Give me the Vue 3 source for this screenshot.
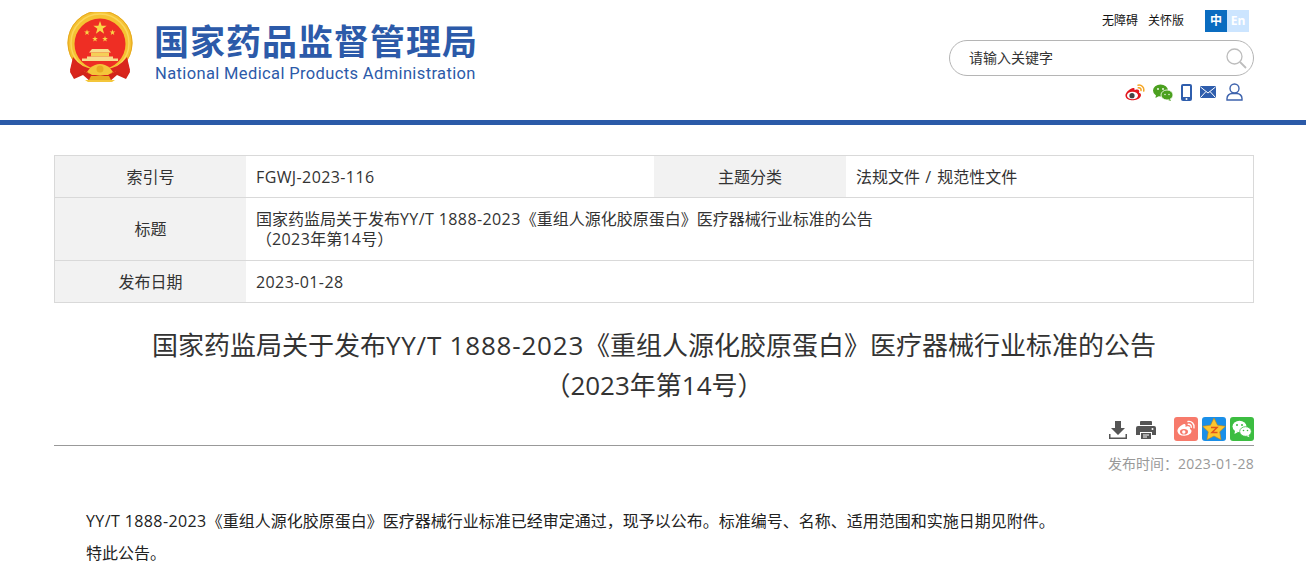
<script setup>
const star = (cx, cy, r, ratio = 0.4) => {
  const pts = []
  for (let i = 0; i < 10; i++) {
    const a = (Math.PI / 5) * i - Math.PI / 2
    const q = i % 2 ? r * ratio : r
    pts.push((cx + q * Math.cos(a)).toFixed(2) + ',' + (cy + q * Math.sin(a)).toFixed(2))
  }
  return pts.join(' ')
}
</script>

<template>
  <div class="page">
    <header class="head">
      <div class="head-in">
        <div class="brand">
          <svg class="emblem" viewBox="0 0 66 70" width="66" height="70">
            <path d="M7 44 L3 60 L7 67 L16 63 L24 70 L42 70 L50 63 L59 67 L63 60 L59 44 Z" fill="#d2231b" />
            <circle cx="33" cy="31" r="32.500" fill="#f5c232" />
            <circle cx="33" cy="31" r="32" fill="none" stroke="#e6a820" stroke-width="1" />
            <circle cx="33" cy="31" r="29" fill="none" stroke="#fbd65a" stroke-width="1.500" />
            <circle cx="33" cy="32" r="25.500" fill="#ee2e24" />
            <polygon :points="star(33, 16, 7)" fill="#f9d648" />
            <polygon :points="star(20, 20.500, 3)" fill="#f9d648" />
            <polygon :points="star(45.500, 20.500, 3)" fill="#f9d648" />
            <polygon :points="star(28, 27, 3)" fill="#f9d648" />
            <polygon :points="star(38, 27, 3)" fill="#f9d648" />
            <path d="M25 37h16l3 3.500H22z" fill="#f7dd8c" />
            <path d="M24 40.500h18v4H24z" fill="#f5cf57" />
            <path d="M20 44.500h26v2H20zM15 46.500h36v2.500H15z" fill="#f7dd8c" />
            <path d="M6 45 Q14 56 27 57 L39 57 Q52 56 60 45 L63 58 L59 65 L50 59 L41 63 L25 63 L16 59 L7 65 L3 58 Z" fill="#d9251d" />
            <path d="M23 56 Q33 48 43 56 L46 60 L41 63 L25 63 L20 60 Z" fill="#f4c63a" />
            <circle cx="33" cy="57" r="3.500" fill="#e8ab23" />
            <path d="M18 68h30l-3 2H21z" fill="#f4c63a" />
            <path d="M24 64h18l2 4H22z" fill="#e8ab23" />
          </svg>
          <div class="brand-text">
            <div class="brand-cn">国家药品监督管理局</div>
            <div class="brand-en">National Medical Products Administration</div>
          </div>
        </div>
        <div class="tools">
          <div class="tools-top">
            <a class="tl">无障碍</a>
            <a class="tl">关怀版</a>
            <div class="lang"><span class="zh">中</span><span class="en">En</span></div>
          </div>
          <div class="search">
            <span class="ph">请输入关键字</span>
            <svg width="22" height="22" viewBox="0 0 22 22" fill="none" stroke="#bdbdbd">
              <circle cx="9.500" cy="9.500" r="7.500" stroke-width="1.300" />
              <path d="M15 15l6 6" stroke-width="1.800" />
            </svg>
          </div>
          <div class="socials">
            <svg width="20" height="17" viewBox="0 0 20 17">
              <path d="M8 4C4 5 0 9 0.500 12C1 15.500 5 16.500 8.500 16.300C12 16 16 14 16 11C16 9.500 14.500 9 14 8.800C14.800 7 14 5.500 12 5.600C11 5.600 10 6 9.500 6.300C9.800 4.500 9.500 3.700 8 4Z" fill="#e3151c" />
              <ellipse cx="7.500" cy="11.500" rx="5.500" ry="3.800" fill="#fff" />
              <circle cx="7" cy="11.700" r="2.600" fill="#444" />
              <path d="M13 1.200C16.500 0.500 19.500 3.500 18.700 7M13.300 3.800C15 3.400 16.400 4.800 16 6.500" fill="none" stroke="#f5a623" stroke-width="1.500" stroke-linecap="round" />
            </svg>
            <svg width="20" height="17" viewBox="0 0 20 17">
              <ellipse cx="7.500" cy="6.500" rx="7.500" ry="6" fill="#4ba01f" />
              <path d="M3 10.500l-0.500 3.500 3.500-2z" fill="#4ba01f" />
              <ellipse cx="14" cy="11" rx="6" ry="5" fill="#4ba01f" stroke="#fff" stroke-width="0.800" />
              <path d="M17 15l1 2-3-1z" fill="#4ba01f" />
              <circle cx="5" cy="5" r="0.900" fill="#fff" /><circle cx="10" cy="5" r="0.900" fill="#fff" />
              <circle cx="12" cy="10.500" r="0.700" fill="#fff" /><circle cx="16" cy="10.500" r="0.700" fill="#fff" />
            </svg>
            <svg width="11" height="17" viewBox="0 0 11 17">
              <rect x="0" y="0" width="11" height="17" rx="2" fill="#2f5ead" />
              <rect x="2" y="2" width="7" height="11" fill="#fff" />
              <circle cx="5.500" cy="15" r="1" fill="#fff" />
            </svg>
            <svg class="mail" width="16" height="12" viewBox="0 0 16 12">
              <rect width="16" height="12" rx="1" fill="#2f5ead" />
              <path d="M0.500 1L8 7l7.500-6M0.500 11.500L6 5.500M15.500 11.500L10 5.500" fill="none" stroke="#fff" stroke-width="1" />
            </svg>
            <svg width="17" height="18" viewBox="0 0 17 18" fill="none" stroke="#3e63ad" stroke-width="1.400">
              <circle cx="8.500" cy="5.500" r="4.500" />
              <path d="M1 17v-1.500C1 12.500 3.500 10.500 6 10.500h5c2.500 0 5 2 5 5V17z" />
            </svg>
          </div>
        </div>
      </div>
    </header>

    <main class="main">
      <table class="info">
        <colgroup><col class="c0" /><col class="c2" /><col class="c1" /><col /></colgroup>
        <tbody>
          <tr class="r1">
            <th>索引号</th><td><span class="lat">FGWJ-2023-116</span></td>
            <th>主题分类</th><td>法规文件<span class="sep"> / </span>规范性文件</td>
          </tr>
          <tr class="r2">
            <th>标题</th>
            <td colspan="3">
              <div>国家药监局关于发布<span class="lat">YY/T 1888-2023</span>《重组人源化胶原蛋白》医疗器械行业标准的公告</div>
              <div>（<span class="lat">2023</span>年第<span class="lat">14</span>号）</div>
            </td>
          </tr>
          <tr class="r1">
            <th>发布日期</th>
            <td colspan="3"><span class="lat">2023-01-28</span></td>
          </tr>
        </tbody>
      </table>

      <h1 class="title">国家药监局关于发布<span class="lat-l">YY/T 1888-2023</span>《重组人源化胶原蛋白》医疗器械行业标准的公告<br />（2023年第14号）</h1>

      <div class="actions">
        <svg class="a1" width="18" height="18" viewBox="0 0 18 18" fill="#555">
          <path d="M6 0h6v7h4l-7 7-7-7h4z" />
          <path d="M0 13h1.500v3.500h15V13H18v5H0z" />
        </svg>
        <svg class="a2" width="20" height="18" viewBox="0 0 20 18" fill="#555">
          <path d="M5 0h10a1 1 0 0 1 1 1v3H4V1a1 1 0 0 1 1-1z" />
          <path d="M2 5h16a2 2 0 0 1 2 2v7h-4v-3H4v3H0V7a2 2 0 0 1 2-2z" />
          <path d="M5 12h10v6H5z" />
          <path d="M7 14h6M7 16h4" stroke="#fff" stroke-width="1" />
          <circle cx="16.500" cy="8" r="1" fill="#fff" />
        </svg>
        <svg class="a3" width="24" height="24" viewBox="0 0 24 24">
          <rect width="24" height="24" rx="3" fill="#f77a6b" />
          <path d="M10 7C7 8 3 11.500 3.500 14.500C4 17.500 7 19 10.500 18.800C14 18.500 17.500 16.800 17.500 14C17.500 13 16.500 12.300 15.800 12C16.500 10.500 15.800 9.300 14 9.300C13 9.300 12 9.800 11.500 10C11.800 8 11.500 6.500 10 7Z" fill="#fff" />
          <ellipse cx="10" cy="14.800" rx="4" ry="2.800" fill="#f77a6b" />
          <circle cx="9.800" cy="15" r="1.700" fill="#fff" />
          <path d="M14 4.500C17.500 3.800 20.800 7 20 10.800M14.300 7.300C16 7 17.600 8.500 17.200 10.300" fill="none" stroke="#fff" stroke-width="1.400" stroke-linecap="round" />
        </svg>
        <svg class="a3" width="24" height="24" viewBox="0 0 24 24">
          <rect width="24" height="24" rx="3" fill="#1a8fe8" />
          <polygon :points="star(12, 13, 12, 0.5)" fill="#fdc62f" stroke="#c98510" stroke-width="0.600" />
          <path d="M9 10.500h6l-5 5h5.500" fill="none" stroke="#e2541b" stroke-width="1.500" />
        </svg>
        <svg class="a3" width="24" height="24" viewBox="0 0 24 24">
          <rect width="24" height="24" rx="3" fill="#3cbd41" />
          <ellipse cx="9.500" cy="9.500" rx="7" ry="5.700" fill="#fff" />
          <path d="M5 13.500l-0.500 3.500 3.500-2z" fill="#fff" />
          <ellipse cx="15.500" cy="14.500" rx="5.800" ry="4.800" fill="#fff" stroke="#3cbd41" stroke-width="0.800" />
          <path d="M18.500 18l1 2.300-3-1.200z" fill="#fff" />
          <circle cx="7" cy="8" r="1" fill="#3cbd41" /><circle cx="12" cy="8" r="1" fill="#3cbd41" />
          <circle cx="13.500" cy="13.500" r="0.800" fill="#3cbd41" /><circle cx="17.500" cy="13.500" r="0.800" fill="#3cbd41" />
        </svg>
      </div>
      <div class="pubdate">发布时间：<span class="lat2">2023-01-28</span></div>

      <article class="body">
        <p><span class="lat">YY/T 1888-2023</span>《重组人源化胶原蛋白》医疗器械行业标准已经审定通过，现予以公布。标准编号、名称、适用范围和实施日期见附件。</p>
        <p>特此公告。</p>
      </article>
    </main>
  </div>
</template>

<style>
html, body { margin: 0; padding: 0; background: #fff; overflow: hidden; }
</style>

<style scoped>
.page { width: 1306px; height: 584px; overflow: hidden; font-family: "Open Sans", "Noto Sans CJK SC", sans-serif; color: #333; }
.lat { letter-spacing: 0.400px; }
.lat2 { letter-spacing: 0.300px; }
.lat-l { letter-spacing: 0.800px; }
.sep { letter-spacing: 1px; white-space: pre; }
.head { height: 120px; border-bottom: 5px solid #2b5aa8; }
.head-in { width: 1200px; margin: 0 0 0 54px; display: flex; justify-content: space-between; }
.brand { display: flex; align-items: flex-start; padding: 12px 0 0 13px; }
.emblem { display: block; }
.brand-text { margin-left: 21px; padding-top: 7px; }
.brand-cn { font-size: 35px; line-height: 42px; font-weight: 700; color: #2c5aa9; letter-spacing: 1px; white-space: nowrap; font-family: "Noto Sans CJK SC", sans-serif; }
.brand-en { font-family: Roboto, sans-serif; font-size: 16.500px; line-height: 20px; margin-top: 3px; padding-left: 1px; color: #2c5aa9; white-space: nowrap; letter-spacing: 0.370px; }
.tools { width: 305px; display: flex; flex-direction: column; align-items: flex-end; }
.tools-top { display: flex; align-items: center; height: 22px; margin-top: 10px; padding-right: 5px; font-size: 12px; color: #111; }
.tl { margin-right: 10px; margin-bottom: 2px; }
.lang { display: flex; margin-left: 11px; font-size: 12px; line-height: 22px; font-weight: 700; text-align: center; }
.zh { width: 22px; background: #0a6cc0; color: #fff; }
.en { width: 22px; background: #cce5ff; color: #fff; }
.search { height: 34px; margin-top: 8px; border: 1px solid #b5b5b5; border-radius: 18px; display: flex; align-items: center; justify-content: space-between; padding: 0 6px 0 19px; width: 278px; font-size: 14px; color: #333; }
.ph { position: relative; top: -1px; }
.socials { display: flex; align-items: center; height: 20px; margin-top: 6px; padding-right: 11px; gap: 8px; }
.mail { margin-right: 2px; }
.main { width: 1200px; margin: 30px 0 0 54px; }
.info { width: 1200px; border-collapse: collapse; table-layout: fixed; font-size: 16px; color: #333; }
.c0 { width: 191.500px; }
.c1 { width: 192px; }
.c2 { width: 408px; }
.info th, .info td { border-top: 1px solid #d9d9d9; border-bottom: 1px solid #d9d9d9; padding: 0 10px; line-height: 20px; }
.info tr > :first-child { border-left: 1px solid #d9d9d9; }
.info tr > :last-child { border-right: 1px solid #d9d9d9; }
.info th { background: #f2f2f2; font-weight: 400; text-align: center; }
.info td { text-align: left; }
.r1 { height: 42px; }
.r2 { height: 63px; }
.title { margin: 22px 0 0; font-size: 26px; line-height: 40px; font-weight: 400; text-align: center; color: #333; }
.actions { display: flex; justify-content: flex-end; align-items: center; height: 28px; margin-top: 12px; border-bottom: 1px solid #999; }
.a1 { margin-right: 9px; margin-bottom: 2px; }
.a2 { margin-right: 18px; margin-bottom: 2px; }
.a3 { margin-right: 4px; margin-bottom: 4px; }
.a3:last-child { margin-right: 0; }
.pubdate { margin-top: 8px; text-align: right; font-size: 14px; line-height: 20px; color: #999; }
.body { margin-top: 36px; padding-left: 32px; font-size: 16px; color: #222; }
.body p { margin: 0 0 10px; line-height: 22px; }
</style>
